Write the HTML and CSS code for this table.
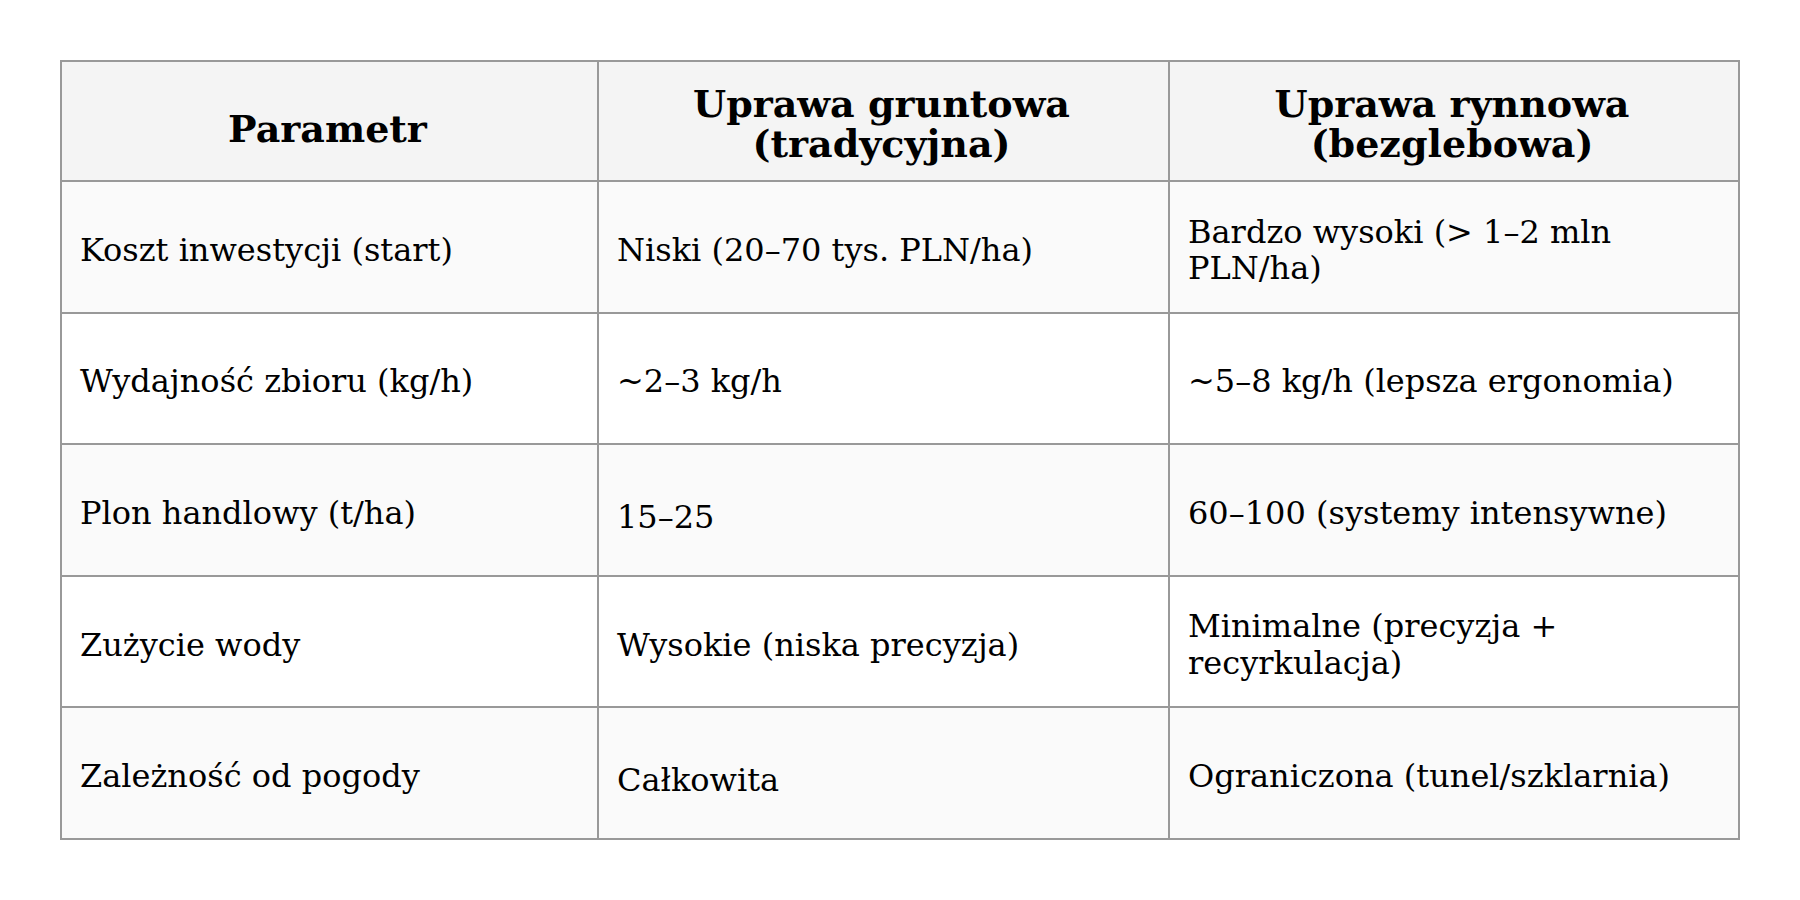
FILE: index.html
```html
<!DOCTYPE html>
<html lang="pl">
<head>
<meta charset="utf-8">
<title>Porównanie upraw</title>
<link rel="stylesheet" href="styles.css">
</head>
<body>
<table class="cmp">
  <thead>
    <tr>
      <th class="c1 single">Parametr</th>
      <th class="c2">Uprawa gruntowa (tradycyjna)</th>
      <th class="c3">Uprawa rynnowa (bezglebowa)</th>
    </tr>
  </thead>
  <tbody>
    <tr>
      <td>Koszt inwestycji (start)</td>
      <td>Niski (20–70 tys. PLN/ha)</td>
      <td>Bardzo wysoki (&gt; 1–2 mln PLN/ha)</td>
    </tr>
    <tr>
      <td>Wydajność zbioru (kg/h)</td>
      <td>~2–3 kg/h</td>
      <td>~5–8 kg/h (lepsza ergonomia)</td>
    </tr>
    <tr>
      <td>Plon handlowy (t/ha)</td>
      <td class="low">15–25</td>
      <td>60–100 (systemy intensywne)</td>
    </tr>
    <tr>
      <td>Zużycie wody</td>
      <td>Wysokie (niska precyzja)</td>
      <td>Minimalne (precyzja + recyrkulacja)</td>
    </tr>
    <tr>
      <td>Zależność od pogody</td>
      <td class="low">Całkowita</td>
      <td>Ograniczona (tunel/szklarnia)</td>
    </tr>
  </tbody>
</table>
</body>
</html>
```

FILE: styles.css
```css
html, body {
  margin: 0;
  padding: 0;
  background: #ffffff;
}

body {
  font-family: "DejaVu Serif", serif;
  color: #000000;
}

.cmp {
  margin: 60px;
  width: 1680px;
  table-layout: fixed;
  border-collapse: separate;
  border-spacing: 0;
  border-left: 2px solid #999999;
  border-top: 2px solid #999999;
}

.cmp th,
.cmp td {
  box-sizing: border-box;
  border-right: 2px solid #999999;
  border-bottom: 2px solid #999999;
  vertical-align: middle;
}

.cmp th {
  height: 120px;
  padding: 5px 20px 0 16px;
  background: #f4f4f4;
  font-size: 38px;
  line-height: 1.05;
  font-weight: bold;
  text-align: center;
}

.cmp th.single {
  padding-top: 15px;
}

.cmp .c1 { width: 537px; }
.cmp .c2 { width: 571px; }
.cmp .c3 { width: 570px; }

.cmp td {
  height: 131.6px;
  padding: 6px 18px 0 18px;
  font-size: 32px;
  line-height: 1.13;
  text-align: left;
}

.cmp td.low {
  padding-top: 14px;
}

.cmp tbody tr:nth-child(odd) td {
  background: #fafafa;
}

.cmp tbody tr:nth-child(even) td {
  background: #ffffff;
}
```
